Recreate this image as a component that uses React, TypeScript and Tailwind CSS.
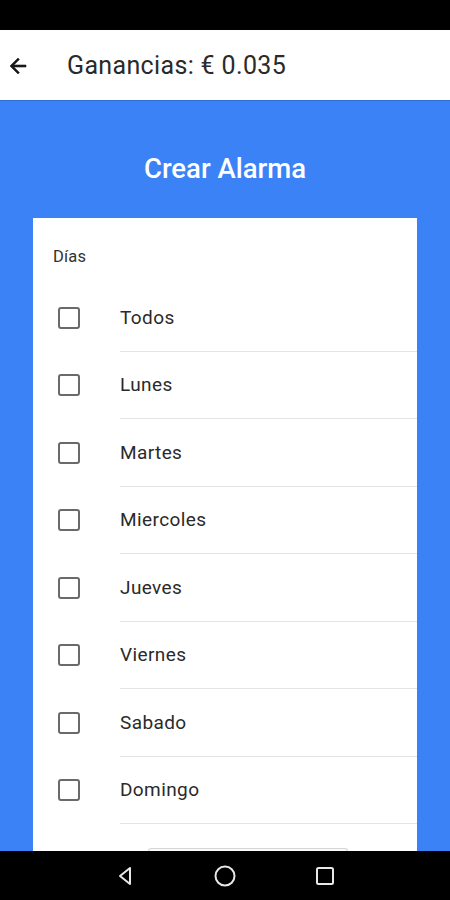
import React from "react";

const days = ["Todos", "Lunes", "Martes", "Miercoles", "Jueves", "Viernes", "Sabado", "Domingo"];

export default function App() {
  return (
    <div
      className="w-[450px] h-[900px] flex flex-col overflow-hidden bg-[#3b82f6]"
      style={{ fontFamily: "Roboto, 'Noto Sans', sans-serif" }}
    >
      <div className="h-[30px] bg-black shrink-0" />
      <div className="h-[71px] bg-white shrink-0 flex items-center border-b border-[#2f6fd6]">
        <div className="w-[67px] pl-[6px] flex items-center">
          <svg width="24" height="24" viewBox="0 0 24 24" className="mt-[1px]">
            <path d="M20 11H7.83l5.59-5.59L12 4l-8 8 8 8 1.41-1.41L7.83 13H20v-2z" fill="#1a1a1a" stroke="#1a1a1a" strokeWidth="0.6" />
          </svg>
        </div>
        <span className="text-[25px] text-[#2a2a2a] tracking-[0.35px] pt-[1px]">Ganancias: € 0.035</span>
      </div>
      <div className="flex-1 flex flex-col min-h-0">
        <div className="h-[117px] shrink-0 flex items-center justify-center pt-[18px]">
          <span className="text-white text-[27.5px] font-medium">Crear Alarma</span>
        </div>
        <div className="flex-1 mx-[33px] bg-white flex flex-col min-h-0 overflow-hidden">
          <div className="shrink-0 pt-[28px] pl-[20px] text-[16.5px] leading-[22px] text-[#333] tracking-[0.2px]">Días</div>
          <div className="shrink-0 h-[16px]" />
          {days.map((d) => (
            <div key={d} className="flex h-[67.5px] shrink-0">
              <div className="w-[87px] flex items-center pl-[25px]">
                <div className="w-[22px] h-[22px] border-2 border-[#6a6a6a] rounded-[3px]" />
              </div>
              <div className="flex-1 flex items-center border-b border-[#e4e4e4] text-[19px] text-[#2a2a2a] pt-[1px] tracking-[0.4px]">
                {d}
              </div>
            </div>
          ))}
          <div className="shrink-0 flex pl-[115px] pt-[24px]">
            <div className="w-[200px] h-[10px] border-t border-x border-[#d6d6d6] rounded-t-[3px] bg-[#fafafa]" />
          </div>
        </div>
      </div>
      <div className="h-[49px] bg-black shrink-0 flex items-center justify-center">
        <div className="flex items-center gap-[74px]">
          <svg width="26" height="26" viewBox="0 0 26 26">
            <path d="M18 5 L8 13 L18 21 Z" fill="none" stroke="#e8e8e8" strokeWidth="2" strokeLinejoin="round" />
          </svg>
          <svg width="26" height="26" viewBox="0 0 26 26">
            <circle cx="13" cy="13" r="9.5" fill="none" stroke="#e8e8e8" strokeWidth="2" />
          </svg>
          <svg width="26" height="26" viewBox="0 0 26 26">
            <rect x="5" y="5" width="16" height="16" rx="1.5" fill="none" stroke="#e8e8e8" strokeWidth="2" />
          </svg>
        </div>
      </div>
    </div>
  );
}
